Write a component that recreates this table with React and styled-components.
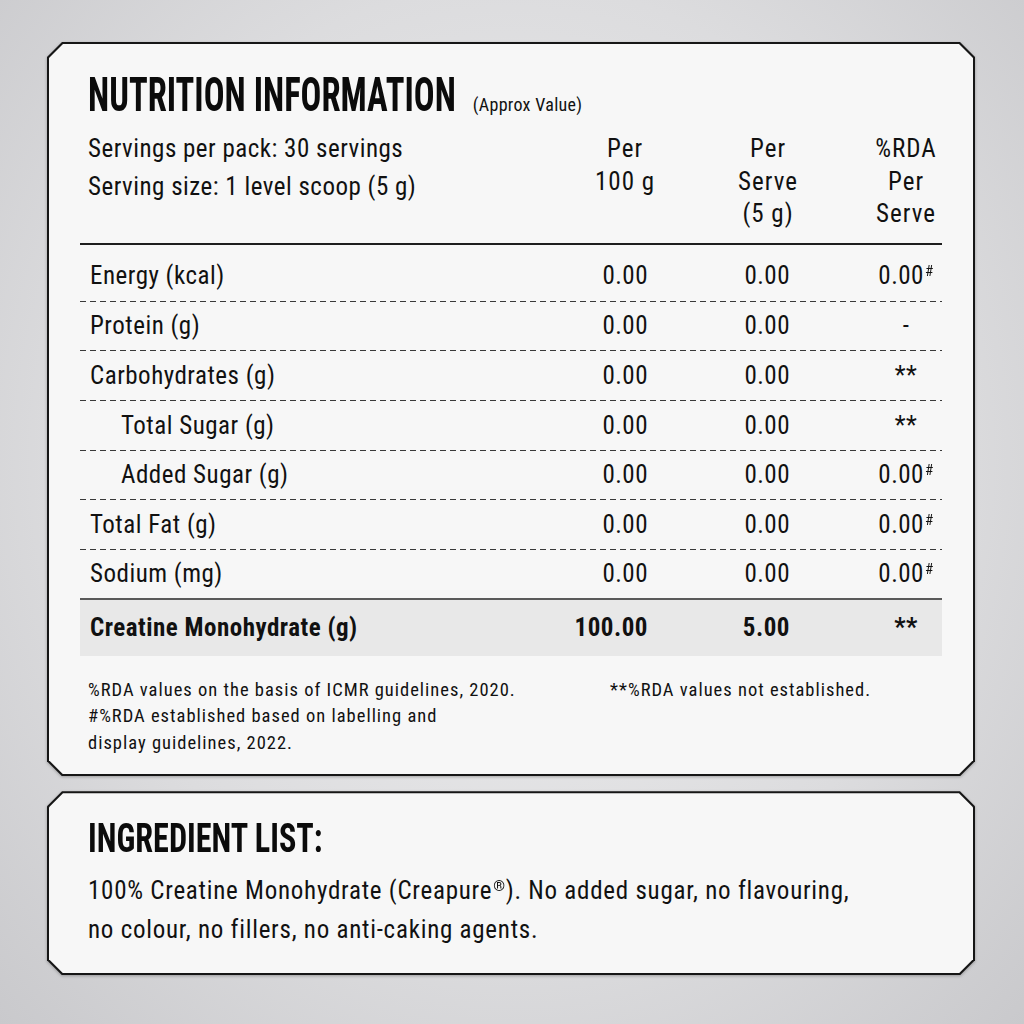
import React from "react";
import styled, { createGlobalStyle } from "styled-components";

const GlobalStyle = createGlobalStyle`
  *, *::before, *::after {
    box-sizing: border-box;
  }
  html, body {
    margin: 0;
    padding: 0;
  }
  body {
    font-family: "Roboto Condensed", "Liberation Sans Narrow", "DejaVu Sans Condensed", "Liberation Sans", sans-serif;
    font-stretch: condensed;
    color: #111;
  }
`;

const Page = styled.div`
  width: 1024px;
  height: 1024px;
  padding: 42px 49px 0 47px;
  background: radial-gradient(ellipse at 50% 45%, #efeff0 0%, #dcdcde 60%, #c9c9cc 100%);
  display: flex;
  flex-direction: column;
  gap: 15px;
`;

const chamfer = (c) =>
  `polygon(${c}px 0, calc(100% - ${c}px) 0, 100% ${c}px, 100% calc(100% - ${c}px), calc(100% - ${c}px) 100%, ${c}px 100%, 0 calc(100% - ${c}px), 0 ${c}px)`;

const Shadow = styled.div`
  filter: drop-shadow(0 1px 1.5px rgba(0, 0, 0, 0.28));
`;

const Frame = styled.div`
  background: #161616;
  padding: 2px;
  clip-path: ${chamfer(15)};
`;

const Panel = styled.div`
  background: #f7f7f7;
  clip-path: ${chamfer(14)};
  padding: ${(p) => p.$pad};
`;

const TitleRow = styled.div`
  display: flex;
  align-items: baseline;
  padding-left: 8px;
`;

/* headline face is much narrower than the body text, squeeze it */
const Title = styled.h1`
  margin: 0 ${(p) => p.$mr}px 0 0;
  font-size: ${(p) => p.$size}px;
  line-height: ${(p) => p.$lh}px;
  font-weight: 700;
  color: #0b0b0b;
  white-space: nowrap;
  transform: scaleX(${(p) => p.$sx});
  transform-origin: left center;
`;

const Approx = styled.span`
  font-size: 18px;
  letter-spacing: 0.3px;
  margin-left: 15px;
`;

const Grid = styled.div`
  display: grid;
  grid-template-columns: 1fr 120px 142px 152px;
  align-items: ${(p) => p.$align || "center"};
`;

const HeadRow = styled(Grid)`
  margin-top: 10px;
  padding-bottom: 12px;
  border-bottom: 2px solid #1e1e1e;
`;

const ServeInfo = styled.div`
  padding-left: 8px;
  font-size: 25px;
  letter-spacing: 0.5px;
  line-height: 38px;
  margin-top: -3px;
  white-space: nowrap;
`;

const HeadCell = styled.div`
  display: flex;
  flex-direction: column;
  align-items: center;
  padding-left: ${(p) => p.$pl}px;
  font-size: 25px;
  letter-spacing: 1px;
  line-height: 32.5px;
  white-space: nowrap;
`;

const Row = styled(Grid)`
  height: ${(p) => p.$h}px;
  padding-top: ${(p) => p.$pt || 0}px;
  padding-bottom: ${(p) => (p.$dashed ? 1 : 0)}px;
  font-size: 25px;
  letter-spacing: 0.5px;
  font-weight: ${(p) => (p.$total ? 700 : 400)};
  background-color: ${(p) => (p.$total ? "#e8e8e8" : "transparent")};
  border-bottom: ${(p) => (p.$solid ? "2px solid #5a5a5a" : "none")};
  background-image: ${(p) =>
    p.$dashed ? "repeating-linear-gradient(to right, #3a3a3a 0 6px, transparent 6px 10px)" : "none"};
  background-size: 100% 1px;
  background-position: left bottom;
  background-repeat: no-repeat;
`;

const Label = styled.div`
  padding-left: ${(p) => (p.$sub ? 41 : 10)}px;
  white-space: nowrap;
`;

const Value = styled.div`
  text-align: ${(p) => (p.$center ? "center" : "right")};
  padding-left: ${(p) => (p.$center ? 80 : 0)}px;
  white-space: nowrap;
`;

const Sup = styled.span`
  font-size: ${(p) => p.$size || 15}px;
  line-height: 0;
  position: relative;
  top: ${(p) => p.$top || -8}px;
  margin-left: 1px;
`;

const Notes = styled.div`
  display: flex;
  margin-top: 21px;
  padding-left: 8px;
  font-size: 18.5px;
  letter-spacing: 1px;
  line-height: 26.5px;
`;

const NoteCol = styled.div`
  width: ${(p) => p.$w}px;
  white-space: nowrap;
`;

const Body = styled.p`
  margin: 8px 0 0;
  padding-left: 8px;
  font-size: 25px;
  letter-spacing: 0.75px;
  line-height: 39px;
  white-space: nowrap;
`;

const headCols = [
  { pl: 74, lines: ["Per", "100 g"] },
  { pl: 98, lines: ["Per", "Serve", "(5 g)"] },
  { pl: 80, lines: ["%RDA", "Per", "Serve"] },
];

const rows = [
  { label: "Energy (kcal)", v: ["0.00", "0.00", "0.00#"] },
  { label: "Protein (g)", v: ["0.00", "0.00", "-"] },
  { label: "Carbohydrates (g)", v: ["0.00", "0.00", "**"] },
  { label: "Total Sugar (g)", sub: true, v: ["0.00", "0.00", "**"] },
  { label: "Added Sugar (g)", sub: true, v: ["0.00", "0.00", "0.00#"] },
  { label: "Total Fat (g)", v: ["0.00", "0.00", "0.00#"] },
  { label: "Sodium (mg)", v: ["0.00", "0.00", "0.00#"] },
];

const renderVal = (s) =>
  s.endsWith("#") ? (
    <>
      {s.slice(0, -1)}
      <Sup>#</Sup>
    </>
  ) : (
    s
  );

const App = () => {
  return (
    <>
      <GlobalStyle />
      <Page>
        <Shadow>
          <Frame>
            <Panel $pad="23px 31px 18px 31px">
              <TitleRow>
                <Title $size={48} $lh={56} $sx={0.72} $mr={-141}>
                  NUTRITION INFORMATION
                </Title>
                <Approx>(Approx Value)</Approx>
              </TitleRow>

              <HeadRow $align="start">
                <ServeInfo>
                  Servings per pack: 30 servings
                  <br />
                  Serving size: 1 level scoop (5 g)
                </ServeInfo>
                {headCols.map((c, i) => (
                  <HeadCell key={i} $pl={c.pl}>
                    {c.lines.map((l) => (
                      <span key={l}>{l}</span>
                    ))}
                  </HeadCell>
                ))}
              </HeadRow>

              {rows.map((r, i) => (
                <Row
                  key={r.label}
                  $pt={i === 0 ? 6 : 0}
                  $h={i === 0 ? 57 : 49.7}
                  $dashed={i < rows.length - 1}
                  $solid={i === rows.length - 1}
                >
                  <Label $sub={r.sub}>{r.label}</Label>
                  {r.v.map((s, j) => (
                    <Value key={j} $center={j === 2}>
                      {renderVal(s)}
                    </Value>
                  ))}
                </Row>
              ))}

              <Row $total $h={56}>
                <Label>Creatine Monohydrate (g)</Label>
                <Value>100.00</Value>
                <Value>5.00</Value>
                <Value $center>**</Value>
              </Row>

              <Notes>
                <NoteCol $w={522}>
                  %RDA values on the basis of ICMR guidelines, 2020.
                  <br />
                  #%RDA established based on labelling and
                  <br />
                  display guidelines, 2022.
                </NoteCol>
                <NoteCol $w={300}>**%RDA values not established.</NoteCol>
              </Notes>
            </Panel>
          </Frame>
        </Shadow>

        <Shadow>
          <Frame>
            <Panel $pad="22px 31px 24px 31px">
              <TitleRow>
                <Title $size={40} $lh={48} $sx={0.805} $mr={-56}>
                  INGREDIENT LIST:
                </Title>
              </TitleRow>
              <Body>
                100% Creatine Monohydrate (Creapure
                <Sup $size={15} $top={-8}>®</Sup>). No added sugar, no flavouring,
                <br />
                no colour, no fillers, no anti-caking agents.
              </Body>
            </Panel>
          </Frame>
        </Shadow>
      </Page>
    </>
  );
};

export default App;
